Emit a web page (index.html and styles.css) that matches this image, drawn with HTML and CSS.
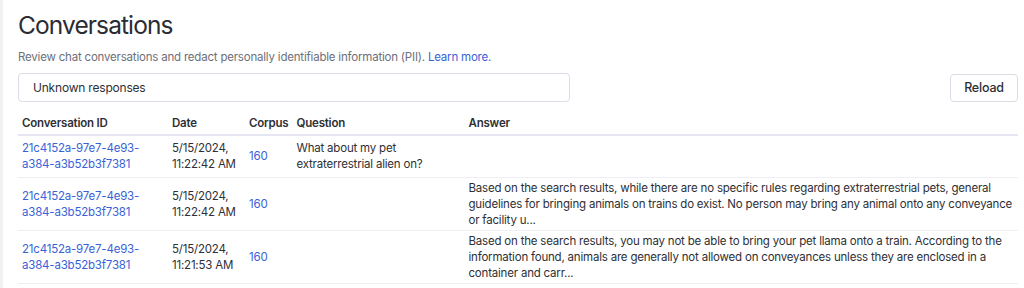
FILE: index.html
```html
<!DOCTYPE html>
<html>
<head>
<meta charset="utf-8">
<link rel="stylesheet" href="styles.css">
</head>
<body>
<div class="page">
  <h1 class="title">Conversations</h1>
  <p class="subtitle">Review chat conversations and redact personally identifiable information (PII). <a class="link" href="#">Learn more.</a></p>
  <div class="toolbar">
    <div class="select">Unknown responses</div>
    <button class="btn">Reload</button>
  </div>
  <table class="grid">
    <colgroup>
      <col class="c-id"><col class="c-date"><col class="c-corpus"><col class="c-q"><col class="c-a">
    </colgroup>
    <thead>
      <tr><th>Conversation ID</th><th>Date</th><th>Corpus</th><th>Question</th><th>Answer</th></tr>
    </thead>
    <tbody>
      <tr>
        <td><a class="link" href="#">21c4152a-97e7-4e93-<br>a384-a3b52b3f7381</a></td>
        <td>5/15/2024,<br>11:22:42 AM</td>
        <td><a class="link" href="#">160</a></td>
        <td>What about my pet<br>extraterrestrial alien on?</td>
        <td></td>
      </tr>
      <tr>
        <td><a class="link" href="#">21c4152a-97e7-4e93-<br>a384-a3b52b3f7381</a></td>
        <td>5/15/2024,<br>11:22:42 AM</td>
        <td><a class="link" href="#">160</a></td>
        <td></td>
        <td>Based on the search results, while there are no specific rules regarding extraterrestrial pets, general guidelines for bringing animals on trains do exist. No person may bring any animal onto any conveyance or facility u...</td>
      </tr>
      <tr>
        <td><a class="link" href="#">21c4152a-97e7-4e93-<br>a384-a3b52b3f7381</a></td>
        <td>5/15/2024,<br>11:21:53 AM</td>
        <td><a class="link" href="#">160</a></td>
        <td></td>
        <td>Based on the search results, you may not be able to bring your pet llama onto a train. According to the information found, animals are generally not allowed on conveyances unless they are enclosed in a container and carr...</td>
      </tr>
    </tbody>
  </table>
</div>
</body>
</html>
```
FILE: styles.css
```css
html, body {
  margin: 0;
  padding: 0;
  background: #ffffff;
}
body {
  font-family: Inter, "Noto Sans", "Liberation Sans", sans-serif;
  color: #2b2d33;
  border-left: 3px solid #f1f1f4;
  min-height: 288px;
  box-sizing: border-box;
}
.page {
  padding: 9px 6px 0 15px;
}
.title {
  margin: 0;
  font-size: 24.5px;
  font-weight: 400;
  letter-spacing: -0.9px;
  line-height: 32px;
  color: #2a2c33;
}
.subtitle {
  margin: 8px 0 0;
  font-size: 11.5px;
  letter-spacing: -0.2px;
  line-height: 16px;
  color: #6d707a;
}
.link {
  color: #3a62d8;
  text-decoration: none;
}
.toolbar {
  display: flex;
  justify-content: space-between;
  align-items: center;
  margin-top: 8px;
}
.select {
  width: 536px;
  height: 27px;
  border: 1px solid #dcdceb;
  border-radius: 4px;
  padding: 0 0 0 14px;
  display: flex;
  align-items: center;
  font-size: 12px;
  letter-spacing: -0.2px;
  color: #2e3036;
}
.btn {
  font-family: inherit;
  font-size: 12.5px;
  font-weight: 500;
  letter-spacing: -0.2px;
  color: #2e3036;
  background: #fff;
  border: 1px solid #dcdce6;
  border-radius: 4px;
  height: 28px;
  width: 68px;
  padding: 0;
}
.grid {
  width: 1000px;
  margin-top: 11px;
  border-collapse: collapse;
  font-size: 11.5px;
  letter-spacing: -0.2px;
  line-height: 16px;
  color: #2e3036;
}
.c-id { width: 150px; }
.c-date { width: 77px; }
.c-corpus { width: 44px; }
.c-q { width: 172px; }
.grid th {
  text-align: left;
  font-weight: 600;
  padding: 2px 4px 3px;
  border-bottom: 2px solid #e6e6f2;
}
.grid tbody tr {
  height: 42px;
}
.grid td {
  padding: 2px 4px;
  vertical-align: middle;
  border-bottom: 1px solid #eeeef4;
}
```
